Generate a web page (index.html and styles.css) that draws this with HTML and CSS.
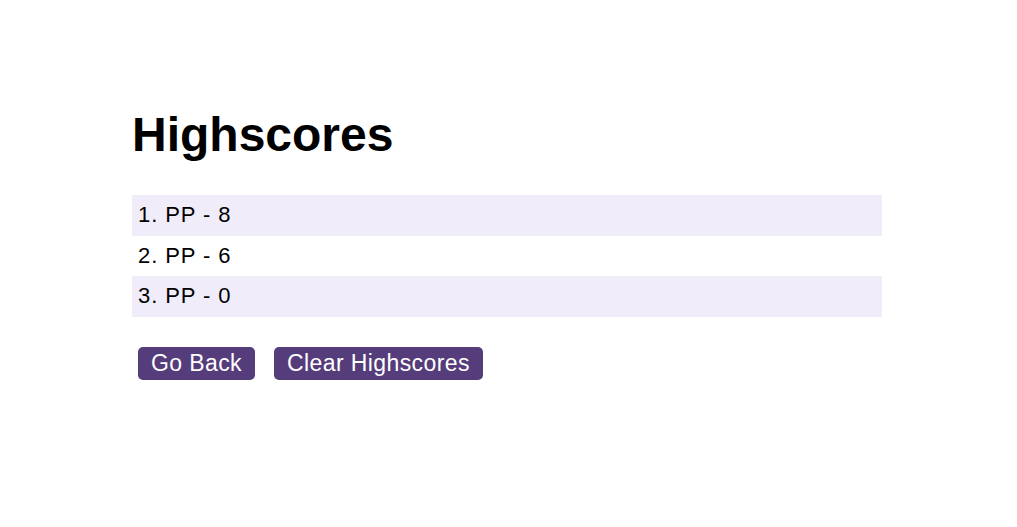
FILE: index.html
```html
<!DOCTYPE html>
<html>
<head>
<meta charset="utf-8">
<link rel="stylesheet" href="styles.css">
</head>
<body>
<main class="wrap">
  <h1 class="title">Highscores</h1>
  <ol class="scores">
    <li class="row alt">1. PP - 8</li>
    <li class="row">2. PP - 6</li>
    <li class="row alt">3. PP - 0</li>
  </ol>
  <div class="actions">
    <button class="btn">Go Back</button>
    <button class="btn">Clear Highscores</button>
  </div>
</main>
</body>
</html>
```
FILE: styles.css
```css
html, body {
  margin: 0;
  padding: 0;
  background: #fff;
  font-family: "Liberation Sans", Arial, sans-serif;
  color: #000;
}
.wrap {
  width: 750px;
  margin-left: 132px;
  padding-top: 107px;
}
.title {
  margin: 0 0 33px 0;
  font-size: 48px;
  font-weight: bold;
  line-height: 55px;
}
.scores {
  list-style: none;
  margin: 0;
  padding: 0;
}
.row {
  font-size: 22px;
  letter-spacing: 0.9px;
  line-height: 24.5px;
  padding: 8px 6px;
}
.alt {
  background: #f1ecfa;
}
.actions {
  display: flex;
  gap: 19px;
  margin-top: 30px;
  padding-left: 6px;
}
.btn {
  font-family: "Liberation Sans", Arial, sans-serif;
  font-size: 23px;
  letter-spacing: 0.4px;
  line-height: 25px;
  padding: 4px 13px;
  border: none;
  border-radius: 5px;
  background: #553c7b;
  color: #fff;
}
```
